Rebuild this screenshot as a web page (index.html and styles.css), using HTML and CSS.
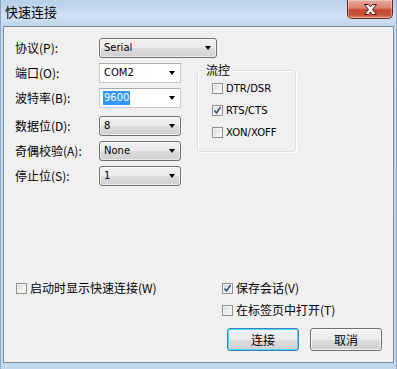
FILE: index.html
```html
<!DOCTYPE html>
<html lang="zh-CN">
<head>
<meta charset="utf-8">
<title>快速连接</title>
<link rel="stylesheet" href="styles.css">
</head>
<body>
<div class="window">
  <div class="titlebar">
    <span class="title">快速连接</span>
    <div class="close">
      <svg width="15" height="11" viewBox="0 0 15 11"><path d="M1.5 0.5h4l2 2.5 2-2.5h4l-4 5 4 5h-4l-2-2.5-2 2.5h-4l4-5z" fill="#fff" stroke="#4a1410" stroke-width="1" stroke-linejoin="round"/></svg>
    </div>
  </div>
  <div class="client">
    <div class="row">
      <span class="label">协议(P):</span>
      <div class="combo drop wide"><span class="val">Serial</span><span class="arrow"></span></div>
    </div>
    <div class="mid">
      <div class="fields">
        <div class="row">
          <span class="label">端口(O):</span>
          <div class="combo edit"><span class="val">COM2</span><span class="arrow"></span></div>
        </div>
        <div class="row">
          <span class="label">波特率(B):</span>
          <div class="combo edit"><span class="val sel">9600</span><span class="arrow"></span></div>
        </div>
        <div class="row gap-more">
          <span class="label">数据位(D):</span>
          <div class="combo drop"><span class="val">8</span><span class="arrow"></span></div>
        </div>
        <div class="row">
          <span class="label">奇偶校验(A):</span>
          <div class="combo drop"><span class="val">None</span><span class="arrow"></span></div>
        </div>
        <div class="row">
          <span class="label">停止位(S):</span>
          <div class="combo drop"><span class="val">1</span><span class="arrow"></span></div>
        </div>
      </div>
      <div class="group">
        <span class="legend">流控</span>
        <label class="check latin"><span class="box"></span>DTR/DSR</label>
        <label class="check latin"><span class="box checked"><svg width="11" height="11" viewBox="0 0 11 11"><path d="M2.5 5.5l2 2.5 4-6" fill="none" stroke="#3b4f8f" stroke-width="1.6"/></svg></span>RTS/CTS</label>
        <label class="check latin"><span class="box"></span>XON/XOFF</label>
      </div>
    </div>
    <div class="bottom">
      <div class="brow">
        <label class="check left-col"><span class="box"></span>启动时显示快速连接(W)</label>
        <label class="check"><span class="box checked"><svg width="11" height="11" viewBox="0 0 11 11"><path d="M2.5 5.5l2 2.5 4-6" fill="none" stroke="#3b4f8f" stroke-width="1.6"/></svg></span>保存会话(V)</label>
      </div>
      <div class="brow">
        <span class="left-col"></span>
        <label class="check"><span class="box"></span>在标签页中打开(T)</label>
      </div>
      <div class="buttons">
        <button class="btn default">连接</button>
        <button class="btn">取消</button>
      </div>
    </div>
  </div>
</div>
</body>
</html>
```
FILE: styles.css
```css
* { box-sizing: border-box; }
html, body { margin: 0; padding: 0; }
body {
  width: 397px;
  height: 369px;
  overflow: hidden;
  font-family: "Noto Sans CJK SC", "DejaVu Sans", sans-serif;
  font-size: 12px;
  color: #000;
}
.window {
  width: 397px;
  height: 369px;
  display: flex;
  flex-direction: column;
  background: linear-gradient(180deg, #bcd3ec 0%, #cfe0f2 6%, #c4d8ee 8%, #c2d6ed 100%);
  border-left: 1px solid #8ea9c8;
  border-right: 1px solid #8ea9c8;
}
.titlebar {
  height: 26px;
  flex: none;
  position: relative;
  display: flex;
  align-items: center;
  padding: 0 0 3px 4px;
  background: linear-gradient(180deg, #b7cfe9 0%, #c9dcf1 45%, #d3e3f4 60%, #bed3eb 100%);
}
.title {
  font-size: 13px;
  line-height: 14px;
}
.close {
  position: absolute;
  right: 3px;
  top: 0;
  width: 46px;
  height: 19px;
  border: 1px solid #6e2820;
  border-top: none;
  border-radius: 0 0 5px 5px;
  background: linear-gradient(180deg, #e9a99b 0%, #d9826f 45%, #c3442f 55%, #c8563c 85%, #d98a6a 100%);
  box-shadow: inset 0 0 0 1px rgba(255,255,255,0.35);
  display: flex;
  align-items: center;
  justify-content: center;
}
.client {
  flex: 1;
  margin: 0 2px 6px 2px;
  background: #f0f0f0;
  border: 1px solid #7a8ba1;
  display: flex;
  flex-direction: column;
  padding: 11px 0 0 11px;
}
.row {
  display: flex;
  align-items: center;
  height: 20px;
}
.label {
  width: 84px;
  flex: none;
  white-space: nowrap;
  line-height: 14px;
}
.combo {
  position: relative;
  width: 82px;
  height: 20px;
  display: flex;
  align-items: center;
  padding-left: 3px;
  font-family: "DejaVu Sans", sans-serif;
  font-size: 10px;
}
.combo.wide { width: 118px; }
.combo.drop {
  border: 1px solid #707070;
  border-radius: 3px;
  background: linear-gradient(180deg, #f2f2f2 0%, #ebebeb 50%, #dddddd 51%, #cfcfcf 100%);
  box-shadow: inset 0 0 0 1px rgba(255,255,255,0.6);
}
.combo.edit {
  border: 1px solid #c5c9d0;
  border-top-color: #abadb3;
  background: #fff;
}
.val { line-height: 14px; padding: 0 1px; }
.val.sel { background: #3399ff; color: #fff; }
.arrow {
  position: absolute;
  right: 5px;
  top: 7px;
  width: 0;
  height: 0;
  border-left: 3.5px solid transparent;
  border-right: 3.5px solid transparent;
  border-top: 4px solid #000;
}
.mid {
  display: flex;
  align-items: flex-start;
  margin-top: 5px;
}
.fields {
  display: flex;
  flex-direction: column;
  gap: 5px;
}
.fields .gap-more { margin-top: 3px; }
.group {
  position: relative;
  margin: 7px 0 0 16px;
  width: 99px;
  height: 82px;
  border: 1px solid #d5dfe5;
  border-radius: 3px;
  box-shadow: inset 1px 1px 0 #fff, 1px 1px 0 #fff;
  display: flex;
  flex-direction: column;
  padding: 10px 0 0 14px;
  gap: 7px;
}
.legend {
  position: absolute;
  left: 6px;
  top: -8px;
  padding: 0 2px;
  background: #f0f0f0;
  line-height: 14px;
  font-size: 12px;
}
.check {
  display: flex;
  align-items: center;
  height: 15px;
  white-space: nowrap;
  line-height: 14px;
}
.check.latin {
  font-family: "DejaVu Sans", sans-serif;
  font-size: 10px;
}
.box {
  width: 11px;
  height: 11px;
  flex: none;
  margin-right: 3px;
  border: 1px solid #8e8f8f;
  background: linear-gradient(135deg, #d4d6da 0%, #eef0f2 60%, #f8f8f8 100%);
  box-shadow: inset 0 0 0 1px #f4f4f4;
  position: relative;
}
.box svg {
  position: absolute;
  left: -1px;
  top: -1px;
}
.bottom {
  margin-top: auto;
  display: flex;
  flex-direction: column;
  padding: 0 11px 11px 1px;
}
.brow {
  display: flex;
  align-items: center;
  height: 16px;
  margin-bottom: 6px;
}
.left-col { width: 206px; flex: none; }
.buttons {
  display: flex;
  justify-content: flex-end;
  gap: 11px;
  margin-top: 4px;
}
.btn {
  width: 72px;
  height: 23px;
  padding: 0;
  font-family: "Noto Sans CJK SC", sans-serif;
  font-size: 12px;
  color: #000;
  border: 1px solid #707070;
  border-radius: 3px;
  background: linear-gradient(180deg, #f2f2f2 0%, #ebebeb 50%, #dddddd 51%, #cfcfcf 100%);
  box-shadow: inset 0 0 0 1px rgba(255,255,255,0.7);
}
.btn.default {
  border-color: #3c7fb1;
  box-shadow: inset 0 0 0 1px #48d8fb;
}
```
